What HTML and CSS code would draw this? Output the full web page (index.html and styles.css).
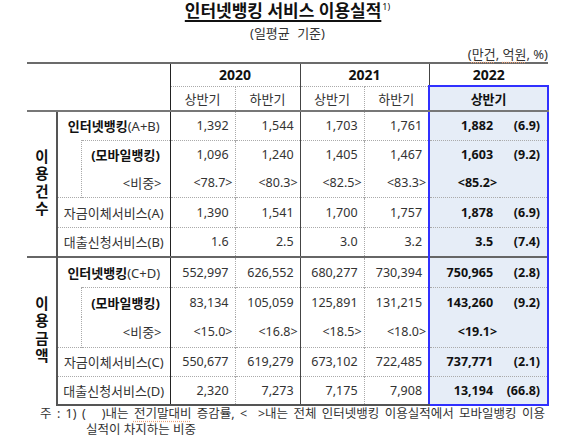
FILE: index.html
```html
<!DOCTYPE html>
<html lang="ko">
<head>
<meta charset="utf-8">
<title>인터넷뱅킹 서비스 이용실적</title>
<link rel="stylesheet" href="styles.css">
</head>
<body>
<div class="page">
  <h1 class="title"><span class="u">인터넷뱅킹 서비스 이용실적</span><sup>1)</sup></h1>
  <div class="subtitle">(일평균 기준)</div>
  <div class="unit">(<span class="sp">만건</span>, <span class="sp">억원</span>, %)</div>
  <table class="stats">
    <colgroup>
      <col class="w-sec"><col class="w-ind"><col class="w-lbl">
      <col class="w-a"><col class="w-b"><col class="w-c"><col class="w-d">
      <col class="w-v"><col class="w-p">
    </colgroup>
    <thead>
      <tr class="yr">
        <th colspan="3" rowspan="2" class="blank"></th>
        <th colspan="2" class="year sep">2020</th>
        <th colspan="2" class="year sep">2021</th>
        <th colspan="2" class="year">2022</th>
      </tr>
      <tr class="half">
        <th class="dot">상반기</th>
        <th class="sep">하반기</th>
        <th class="dot">상반기</th>
        <th>하반기</th>
        <th colspan="2" class="hl-head">상반기</th>
      </tr>
    </thead>
    <tbody>
      <tr class="r-main">
        <th rowspan="5" class="sec-label"><span class="vt">이용건수</span></th>
        <th colspan="2" class="lbl"><b>인터넷뱅킹</b>(A+B)</th>
        <td class="dot">1,392</td><td class="sep">1,544</td><td class="dot">1,703</td><td>1,761</td>
        <td class="hv">1,882</td><td class="hc">(6.9)</td>
      </tr>
      <tr class="r-mob">
        <td rowspan="2" class="indent"></td>
        <th class="lbl"><b>(모바일뱅킹)</b></th>
        <td class="dot">1,096</td><td class="sep">1,240</td><td class="dot">1,405</td><td>1,467</td>
        <td class="hv">1,603</td><td class="hc">(9.2)</td>
      </tr>
      <tr class="r-ratio">
        <th class="lbl ratio">&lt;비중&gt;</th>
        <td class="dot br">&lt;78.7&gt;</td><td class="sep br">&lt;80.3&gt;</td><td class="dot br">&lt;82.5&gt;</td><td class="br">&lt;83.3&gt;</td>
        <td class="hv br">&lt;85.2&gt;</td><td class="hc"></td>
      </tr>
      <tr class="r-line">
        <th colspan="2" class="lbl">자금이체서비스(A)</th>
        <td class="dot">1,390</td><td class="sep">1,541</td><td class="dot">1,700</td><td>1,757</td>
        <td class="hv">1,878</td><td class="hc">(6.9)</td>
      </tr>
      <tr class="r-line">
        <th colspan="2" class="lbl">대출신청서비스(B)</th>
        <td class="dot">1.6</td><td class="sep">2.5</td><td class="dot">3.0</td><td>3.2</td>
        <td class="hv">3.5</td><td class="hc">(7.4)</td>
      </tr>
    </tbody>
    <tbody class="sec2">
      <tr class="r-main r-first">
        <th rowspan="5" class="sec-label"><span class="vt">이용금액</span></th>
        <th colspan="2" class="lbl"><b>인터넷뱅킹</b>(C+D)</th>
        <td class="dot">552,997</td><td class="sep">626,552</td><td class="dot">680,277</td><td>730,394</td>
        <td class="hv">750,965</td><td class="hc">(2.8)</td>
      </tr>
      <tr class="r-mob">
        <td rowspan="2" class="indent"></td>
        <th class="lbl"><b>(모바일뱅킹)</b></th>
        <td class="dot">83,134</td><td class="sep">105,059</td><td class="dot">125,891</td><td>131,215</td>
        <td class="hv">143,260</td><td class="hc">(9.2)</td>
      </tr>
      <tr class="r-ratio">
        <th class="lbl ratio">&lt;비중&gt;</th>
        <td class="dot br">&lt;15.0&gt;</td><td class="sep br">&lt;16.8&gt;</td><td class="dot br">&lt;18.5&gt;</td><td class="br">&lt;18.0&gt;</td>
        <td class="hv br">&lt;19.1&gt;</td><td class="hc"></td>
      </tr>
      <tr class="r-line">
        <th colspan="2" class="lbl">자금이체서비스(C)</th>
        <td class="dot">550,677</td><td class="sep">619,279</td><td class="dot">673,102</td><td>722,485</td>
        <td class="hv">737,771</td><td class="hc">(2.1)</td>
      </tr>
      <tr class="r-line r-last">
        <th colspan="2" class="lbl">대출신청서비스(D)</th>
        <td class="dot">2,320</td><td class="sep">7,273</td><td class="dot">7,175</td><td>7,908</td>
        <td class="hv">13,194</td><td class="hc">(66.8)</td>
      </tr>
    </tbody>
  </table>
  <div class="note">
    <p class="note-1">주 : 1) (&nbsp;&nbsp; )내는 <span class="sp">전기말대비</span> 증감률, &lt;&nbsp; &gt;내는 전체 인터넷뱅킹 이용실적에서 모바일뱅킹 이용</p>
    <p class="note-2">실적이 차지하는 비중</p>
  </div>
</div>
</body>
</html>
```

FILE: styles.css
```css
* { box-sizing: border-box; }

body {
  margin: 0;
  background: #fff;
  font-family: "Noto Sans", "Noto Sans CJK KR", sans-serif;
  color: #333;
}

.page {
  width: 570px;
  height: 439px;
  padding-left: 27px;
  overflow: hidden;
}

.title {
  margin: 0;
  width: 521px;
  text-align: center;
  font-size: 17px;
  font-weight: 700;
  line-height: 22px;
  color: #111;
}

.title .u {
  text-decoration: underline;
  text-decoration-thickness: 1.5px;
  text-underline-offset: 3px;
}

.title sup {
  font-size: 9px;
  font-weight: 400;
  line-height: 0;
  vertical-align: 7px;
  margin-left: 1px;
}

.subtitle {
  width: 521px;
  margin-top: 3px;
  text-align: center;
  font-size: 13px;
  line-height: 16px;
  word-spacing: 4px;
  color: #333;
}

.unit {
  width: 521px;
  margin-top: 5px;
  text-align: right;
  font-size: 13px;
  line-height: 16px;
  color: #333;
}

.sp {
  text-decoration: underline dotted #e9a27a;
  text-underline-offset: 3px;
}

/* table */
.stats {
  border-collapse: collapse;
  table-layout: fixed;
  width: 521px;
  font-size: 12.5px;
}

.w-sec { width: 30px; }
.w-ind { width: 24px; }
.w-lbl { width: 89px; }
.w-a { width: 65px; }
.w-b { width: 65px; }
.w-c { width: 64px; }
.w-d { width: 65px; }
.w-v { width: 71px; }
.w-p { width: 48px; }

.stats th,
.stats td {
  padding: 0;
  white-space: nowrap;
}

.yr { height: 23px; }
.yr th {
  border-top: 2px solid #6b6b6b;
  border-bottom: 1px dotted #aaa;
  font-size: 14px;
  font-weight: 700;
  color: #111;
  text-align: center;
}
.yr .blank {
  border-right: 1px solid #222;
  border-bottom: 2px solid #777;
}

.half { height: 25px; }
.half th {
  border-bottom: 2px solid #777;
  font-size: 13px;
  font-weight: 400;
  text-align: center;
  color: #333;
}
.half .hl-head {
  border-top: 2px solid #3030ff;
  border-left: 2px solid #3030ff;
  border-right: 2px solid #3030ff;
  background: #e6edf7;
  font-weight: 700;
  color: #111;
}

.stats .sep { border-right: 1px solid #444; }
.stats .dot { border-right: 1px dotted #aaa; }

/* body rows */
.r-main { height: 29px; }
.r-mob { height: 29px; }
.r-ratio { height: 28px; }
.r-line { height: 30px; }
.sec2 .r-line { height: 29px; }
.sec2 .r-main { height: 30px; }
.sec2 .r-mob { height: 30px; }
.sec2 .r-ratio { height: 30px; }

.stats td {
  text-align: right;
  padding-right: 6px;
  color: #333;
  vertical-align: middle;
}
.stats td.br { padding-right: 2px; }

.sec-label {
  border-right: 2px solid #555;
  text-align: center;
  vertical-align: middle;
}
.vt {
  display: inline-block;
  writing-mode: vertical-rl;
  text-orientation: upright;
  font-size: 14.5px;
  font-weight: 700;
  line-height: 16px;
  letter-spacing: 3px;
  color: #111;
  margin-top: 3px;
}

.lbl {
  border-right: 1px solid #222;
  font-size: 13px;
  font-weight: 400;
  text-align: center;
  color: #333;
}
.lbl b {
  font-weight: 700;
  color: #111;
}
.lbl.ratio {
  text-align: right;
  padding-right: 8px !important;
}

.indent { border-right: 1px dotted #aaa; }

.r-mob th,
.r-mob td:not(.indent) { border-top: 1px dotted #aaa; }
.r-line th,
.r-line td { border-top: 1px dotted #aaa; }

.r-first th,
.r-first td { border-top: 2px solid #666; }

.r-last th,
.r-last td { border-bottom: 2px solid #555; }

.stats td.hv {
  border-left: 2px solid #3030ff;
  background: #e6edf7;
  font-weight: 700;
  color: #111;
  padding-right: 7px;
}
.stats td.hv.br { padding-right: 3px; }
.stats td.hc {
  border-right: 2px solid #3030ff;
  background: #e6edf7;
  font-weight: 700;
  color: #111;
  padding-right: 7px;
}
.r-last td.hv,
.r-last td.hc { border-bottom: 2px solid #3030ff; }

/* note */
.note {
  width: 505px;
  margin-left: 13px;
  font-size: 12.5px;
  line-height: 16px;
  color: #333;
}
.note p { margin: 0; }
.note-1 {
  text-align: justify;
  text-align-last: justify;
}
.note-2 { padding-left: 46px; }
```
